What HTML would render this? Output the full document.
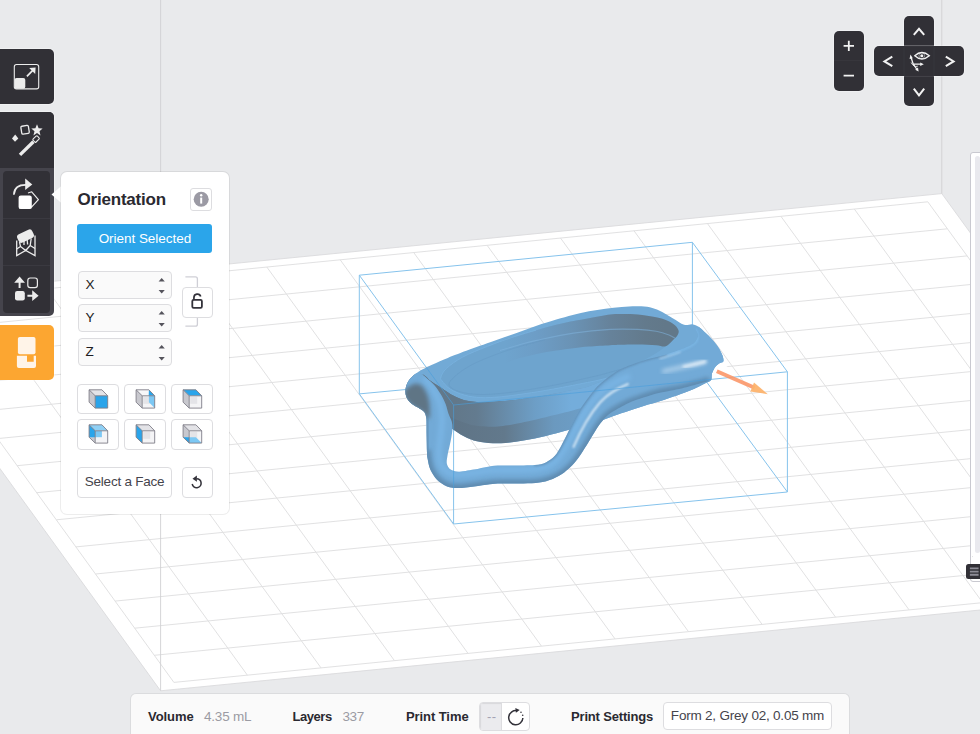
<!DOCTYPE html>
<html lang="en"><head><meta charset="utf-8"><title>PreForm</title>
<style>
html,body{margin:0;padding:0}
body{width:980px;height:734px;overflow:hidden;background:#e9eaec;position:relative;font-family:"Liberation Sans",sans-serif;color:#2a2930}
#scene{position:absolute;left:0;top:0}
.abs{position:absolute}
.dark{background:#313036;box-shadow:0 0 0 1px rgba(255,255,255,.35)}
.tb1{left:-6px;top:49px;width:60px;height:55px;border-radius:5px}
.tb2{left:-6px;top:112px;width:60px;height:204px;border-radius:5px;background:#45444c;box-shadow:0 0 0 1px rgba(255,255,255,.35)}
.tb2a{left:0;top:0;width:60px;height:56px;background:#313036;border-radius:5px 5px 0 0}
.tb2b{left:9px;top:59px;width:47px;height:141.5px;background:#313036;border-radius:4px}
.tb2b i{position:absolute;left:0;width:47px;height:1px;background:#3a3940}
.tb3{left:-6px;top:324.5px;width:60px;height:55px;border-radius:5px;background:#fca631;box-shadow:0 0 0 1px rgba(255,255,255,.35)}
.panel{left:61px;top:172px;width:168px;height:342px;background:#fff;border-radius:6px;box-shadow:0 0 0 1px rgba(0,0,0,.07)}
.ptitle{left:16.5px;top:16.8px;font-weight:bold;font-size:17px;line-height:22px;letter-spacing:-0.2px;color:#2a2930;white-space:nowrap}
.btn{box-sizing:border-box;border:1px solid #dddde0;border-radius:4px;background:#fff}
.info{left:129px;top:16.3px;width:22.4px;height:22.4px;border-radius:3px}
.orient{left:16.4px;top:52.3px;width:135px;height:28.5px;border-radius:3px;background:#2ba5ea;color:#fff;font-size:13.5px;line-height:30.5px;text-align:center;letter-spacing:-0.04px;white-space:nowrap}
.inp{left:16.6px;width:94.4px;height:28.3px;background:#fafafa;font-size:13.5px;line-height:26.3px;color:#1d1d22}
.inp span{position:absolute;left:7px;top:0}
.cube{width:41.5px;height:30.2px}
.bar{left:131px;top:693.5px;width:718px;height:48px;background:#fafafa;border-radius:5px;box-shadow:0 0 0 1px rgba(0,0,0,.06)}
.bar b,.bar span{position:absolute;top:14px;font-size:13.5px;line-height:18px;white-space:nowrap}
.bar b{color:#2a2930;font-size:13px}
.bar span{color:#9b9ba3}
.navd{background:#313036;border-radius:5px;box-shadow:0 0 0 1px rgba(255,255,255,.3)}
</style></head><body>
<svg id="scene" width="980" height="734" viewBox="0 0 980 734">
<polygon points="-122.9,298.7 941.8,193.6 1226.8,585.7 160.6,690.8" fill="#ffffff" stroke="#dadadc" stroke-width="0.9"/>
<path d="M-100.3,303.3 L173.9,682.4 M-100.3,303.3 L927.8,201.8 M-26.9,296 L247.4,675.2 M-80.7,330.3 L947.4,228.8 M46.6,288.8 L321,667.9 M-61.1,357.4 L967.1,255.9 M120,281.5 L394.5,660.7 M-41.6,384.4 L986.8,282.9 M193.4,274.3 L468,653.4 M-22,411.5 L1006.4,310 M266.8,267 L541.5,646.2 M-2.4,438.6 L1026.1,337.1 M340.2,259.8 L615,638.9 M17.2,465.7 L1045.8,364.2 M413.7,252.5 L688.5,631.7 M36.8,492.7 L1065.4,391.2 M487.1,245.3 L762.1,624.4 M56.4,519.8 L1085.1,418.3 M560.5,238 L835.6,617.2 M75.9,546.9 L1104.8,445.4 M634,230.8 L909.1,609.9 M95.5,574 L1124.5,472.5 M707.4,223.5 L982.7,602.7 M115.1,601.1 L1144.2,499.6 M780.9,216.3 L1056.2,595.4 M134.7,628.2 L1163.9,526.7 M854.3,209 L1129.7,588.2 M154.3,655.3 L1183.6,553.8 M927.8,201.8 L1203.3,580.9 M173.9,682.4 L1203.3,580.9" fill="none" stroke="#dfdfe0" stroke-width="0.95"/>
<path d="M160.6,690.8 V0 M941.8,193.6 V0" fill="none" stroke="#d0d0d3" stroke-width="0.9"/>
<circle cx="721" cy="372.5" r="8.6" fill="#ffffff"/>
<path d="M359.3,275.2 L692.4,242.3 M692.4,242.3 L787.4,371.8 M787.4,371.8 L453.6,405 M453.6,405 L359.3,275.2 M359.3,393.9 L692.4,362.6 M692.4,362.6 L787.4,492 M787.4,492 L453.6,524 M453.6,524 L359.3,393.9 M359.3,275.2 L359.3,393.9 M692.4,242.3 L692.4,362.6 M787.4,371.8 L787.4,492 M453.6,405 L453.6,524" fill="none" stroke="#86c3ec" stroke-width="1"/>
<defs>
<clipPath id="modelclip"><path d="M405.6,389C406,386.3 406.8,383.6 408.5,381C410.2,378.4 412.8,375.9 416,373.5C419.2,371.1 423,369.2 427.7,366.8C432.4,364.4 438.6,361.7 444,359.4C449.4,357.1 453.3,355.5 460.4,352.9C467.5,350.2 478.3,346.4 486.5,343.5C494.7,340.6 501.2,338.4 509.4,335.5C517.6,332.6 528.1,328.6 535.9,326C543.7,323.4 550.2,321.4 556.3,319.6C562.4,317.8 567.2,316.4 572.7,315C578.2,313.6 583.5,312.4 589,311.3C594.5,310.2 599.9,309.4 605.4,308.7C610.9,308 616.3,307.3 621.7,306.9C627.1,306.5 633.3,306.2 638,306.3C642.7,306.4 646.2,306.6 649.8,307.3C653.4,308.1 655.8,309 659.6,310.8C663.4,312.6 668.6,315.9 672.7,318.2C676.8,320.5 680.8,323.8 684.1,324.8C687.4,325.8 689.8,323.9 692.3,324.3C694.8,324.7 696.6,325.6 698.8,327C701,328.4 703.2,330.7 705.4,332.7C707.6,334.7 709.7,336.8 711.9,339.2C714.1,341.6 716.6,344.7 718.4,347.4C720.2,350.1 721.7,353.2 722.5,355.6C723.3,358 723.9,360.2 723.3,361.5C722.7,362.8 720.5,362.4 719,363.5C717.5,364.6 715.7,366.3 714.5,368C713.3,369.7 712.5,371.5 711.9,373.5C711.3,375.5 712.2,378.4 711.1,380C710,381.6 708.3,381.8 705.4,383.3C702.5,384.8 698,387.3 693.9,389.1C689.8,390.9 685.7,392.2 680.8,394C675.9,395.8 669.9,397.9 664.5,399.7C659.1,401.5 654,402.8 648.2,404.6C642.4,406.4 635.7,408.6 629.9,410.5C624.1,412.4 618.1,414.4 613.5,416C608.9,417.6 606,418.9 602.1,420.2C598.2,421.5 595.8,422.3 590,424C584.2,425.7 574.6,428.3 567.2,430.3C559.9,432.3 553.2,434.2 545.9,435.9C538.6,437.6 531,439.2 523.5,440.4C516,441.6 508.1,442.9 501,443.2C493.9,443.5 486.4,442.9 480.8,442C475.2,441.1 471.8,440 467.3,438C462.8,436 458.4,433 453.9,430C449.3,427 444.6,423.1 440,420C435.4,416.9 429.4,413.6 426,411.7C422.6,409.8 421.9,409.8 419.5,408.4C417.1,407 413.5,405.4 411.3,403.5C409.1,401.6 407.3,399.4 406.4,397C405.4,394.6 405.2,391.7 405.6,389Z"/><path d="M416,373.5C413.9,374.4 410.1,378.7 408.5,381C406.9,383.3 405.9,386.6 405.6,389C405.3,391.4 405.5,394.8 406.4,397C407.3,399.2 409.3,401.8 411.3,403.5C413.3,405.2 417.5,407 419.5,408.4C421.5,409.8 423.5,410.9 424.5,412.5C425.5,414.1 426,415.8 426.3,419C426.6,422.2 426.4,429.1 426.5,433.7C426.6,438.3 426.8,446.4 426.9,450C427,453.6 427,455.1 427.5,458C428,460.9 428.9,466.3 430.3,469.6C431.7,472.9 434.5,477.2 437,479.7C439.5,482.2 443.9,485.2 447.1,486.4C450.3,487.6 454.3,488 458.4,488C462.4,488 469.4,487 474.1,486.4C478.8,485.8 485.8,484.6 489.8,484.2C493.8,483.8 495.9,483.6 501,483.5C506.1,483.4 517.8,483.6 523.5,483.5C529.2,483.4 534.8,483.3 539.2,482.6C543.6,481.9 549,480.4 552.7,478.9C556.5,477.4 561,474.9 564.2,472.5C567.4,470.1 571.6,466.2 574.3,463.1C577,460 580,455.4 582.5,451.7C585,448 588.3,442.5 590.7,438.6C593.1,434.7 596.6,428.8 598.8,425.6C601,422.4 603.3,419.5 605.4,417.4C607.5,415.3 609.6,413.6 613,411.5C616.4,409.4 623.7,405.3 628.3,403.2C632.9,401.1 639,399.1 643.6,397.6C648.2,396.1 653.2,394.4 658.9,393C664.6,391.6 675.6,389.8 681.8,388.4C688,387 695.9,384.7 700,383.5C704.1,382.3 707.6,382.1 709.4,380.6C711.2,379.1 711.1,375.4 711.9,373.5C712.7,371.6 713.4,369.5 714.5,368C715.6,366.5 717.7,364.5 719,363.5C720.3,362.5 722.8,362.7 723.3,361.5C723.8,360.3 723.2,357.7 722.5,355.6C721.8,353.5 720,349.9 718.4,347.4C716.8,344.9 713.9,341.4 711.9,339.2C709.9,337 707.4,334.5 705.4,332.7C703.4,330.9 700.3,327.6 698.8,327C697.3,326.4 695.7,327.8 695.6,329C695.5,330.2 698.4,333.2 698.2,335.3C698,337.4 696.6,340.9 694.1,343C691.6,345.1 685.9,347.4 681.8,349.1C677.7,350.8 671.1,353 666.5,354.4C661.9,355.8 655.8,357 651.2,358.3C646.6,359.6 640.5,361.3 635.9,362.9C631.3,364.5 624,367.4 620.6,369C617.2,370.6 615.8,371.9 613.5,373.5C611.2,375.1 607.8,377.4 605.4,379.4C603,381.3 599.7,383.9 597.2,386.5C594.7,389.1 591.5,393.5 589,396.8C586.5,400.1 583,404.8 580.8,408.2C578.6,411.6 576.2,416 574.3,419.7C572.3,423.4 569.7,428.8 567.8,432.7C565.9,436.6 563.3,442 561.4,445.5C559.5,449 557.2,453.3 554.9,455.8C552.6,458.3 548.9,461 545.9,462.4C542.9,463.8 539.8,464.6 534.7,465.1C529.6,465.6 518.3,465.5 512.2,465.6C506.1,465.7 500,465.2 494.3,465.8C488.6,466.4 479.5,468.7 474.1,469.6C468.7,470.5 461.9,471.8 458.4,471.8C454.9,471.8 452.2,470.8 450.5,469.6C448.8,468.4 447.2,465.7 446.8,463.5C446.4,461.3 447.2,457.6 447.6,455C448,452.4 449,448.7 449.6,446C450.2,443.3 451,439.6 451.4,437C451.8,434.4 452.4,431.3 452.5,429C452.6,426.7 452.4,424.1 451.8,421.8C451.2,419.5 449.3,416.3 448.4,413.6C447.5,410.9 446.7,406.9 445.6,404C444.5,401.1 442.6,397.4 440.9,394.5C439.2,391.6 436.2,387.4 434.1,385C432,382.6 428.9,380.3 427.2,378.8C425.5,377.3 424.2,375.6 422.5,374.8C420.8,374 418.1,372.6 416,373.5Z"/></clipPath>
<clipPath id="bodyclip"><path d="M405.6,389C406,386.3 406.8,383.6 408.5,381C410.2,378.4 412.8,375.9 416,373.5C419.2,371.1 423,369.2 427.7,366.8C432.4,364.4 438.6,361.7 444,359.4C449.4,357.1 453.3,355.5 460.4,352.9C467.5,350.2 478.3,346.4 486.5,343.5C494.7,340.6 501.2,338.4 509.4,335.5C517.6,332.6 528.1,328.6 535.9,326C543.7,323.4 550.2,321.4 556.3,319.6C562.4,317.8 567.2,316.4 572.7,315C578.2,313.6 583.5,312.4 589,311.3C594.5,310.2 599.9,309.4 605.4,308.7C610.9,308 616.3,307.3 621.7,306.9C627.1,306.5 633.3,306.2 638,306.3C642.7,306.4 646.2,306.6 649.8,307.3C653.4,308.1 655.8,309 659.6,310.8C663.4,312.6 668.6,315.9 672.7,318.2C676.8,320.5 680.8,323.8 684.1,324.8C687.4,325.8 689.8,323.9 692.3,324.3C694.8,324.7 696.6,325.6 698.8,327C701,328.4 703.2,330.7 705.4,332.7C707.6,334.7 709.7,336.8 711.9,339.2C714.1,341.6 716.6,344.7 718.4,347.4C720.2,350.1 721.7,353.2 722.5,355.6C723.3,358 723.9,360.2 723.3,361.5C722.7,362.8 720.5,362.4 719,363.5C717.5,364.6 715.7,366.3 714.5,368C713.3,369.7 712.5,371.5 711.9,373.5C711.3,375.5 712.2,378.4 711.1,380C710,381.6 708.3,381.8 705.4,383.3C702.5,384.8 698,387.3 693.9,389.1C689.8,390.9 685.7,392.2 680.8,394C675.9,395.8 669.9,397.9 664.5,399.7C659.1,401.5 654,402.8 648.2,404.6C642.4,406.4 635.7,408.6 629.9,410.5C624.1,412.4 618.1,414.4 613.5,416C608.9,417.6 606,418.9 602.1,420.2C598.2,421.5 595.8,422.3 590,424C584.2,425.7 574.6,428.3 567.2,430.3C559.9,432.3 553.2,434.2 545.9,435.9C538.6,437.6 531,439.2 523.5,440.4C516,441.6 508.1,442.9 501,443.2C493.9,443.5 486.4,442.9 480.8,442C475.2,441.1 471.8,440 467.3,438C462.8,436 458.4,433 453.9,430C449.3,427 444.6,423.1 440,420C435.4,416.9 429.4,413.6 426,411.7C422.6,409.8 421.9,409.8 419.5,408.4C417.1,407 413.5,405.4 411.3,403.5C409.1,401.6 407.3,399.4 406.4,397C405.4,394.6 405.2,391.7 405.6,389Z"/></clipPath>
<clipPath id="tubeclip"><path d="M416,373.5C413.9,374.4 410.1,378.7 408.5,381C406.9,383.3 405.9,386.6 405.6,389C405.3,391.4 405.5,394.8 406.4,397C407.3,399.2 409.3,401.8 411.3,403.5C413.3,405.2 417.5,407 419.5,408.4C421.5,409.8 423.5,410.9 424.5,412.5C425.5,414.1 426,415.8 426.3,419C426.6,422.2 426.4,429.1 426.5,433.7C426.6,438.3 426.8,446.4 426.9,450C427,453.6 427,455.1 427.5,458C428,460.9 428.9,466.3 430.3,469.6C431.7,472.9 434.5,477.2 437,479.7C439.5,482.2 443.9,485.2 447.1,486.4C450.3,487.6 454.3,488 458.4,488C462.4,488 469.4,487 474.1,486.4C478.8,485.8 485.8,484.6 489.8,484.2C493.8,483.8 495.9,483.6 501,483.5C506.1,483.4 517.8,483.6 523.5,483.5C529.2,483.4 534.8,483.3 539.2,482.6C543.6,481.9 549,480.4 552.7,478.9C556.5,477.4 561,474.9 564.2,472.5C567.4,470.1 571.6,466.2 574.3,463.1C577,460 580,455.4 582.5,451.7C585,448 588.3,442.5 590.7,438.6C593.1,434.7 596.6,428.8 598.8,425.6C601,422.4 603.3,419.5 605.4,417.4C607.5,415.3 609.6,413.6 613,411.5C616.4,409.4 623.7,405.3 628.3,403.2C632.9,401.1 639,399.1 643.6,397.6C648.2,396.1 653.2,394.4 658.9,393C664.6,391.6 675.6,389.8 681.8,388.4C688,387 695.9,384.7 700,383.5C704.1,382.3 707.6,382.1 709.4,380.6C711.2,379.1 711.1,375.4 711.9,373.5C712.7,371.6 713.4,369.5 714.5,368C715.6,366.5 717.7,364.5 719,363.5C720.3,362.5 722.8,362.7 723.3,361.5C723.8,360.3 723.2,357.7 722.5,355.6C721.8,353.5 720,349.9 718.4,347.4C716.8,344.9 713.9,341.4 711.9,339.2C709.9,337 707.4,334.5 705.4,332.7C703.4,330.9 700.3,327.6 698.8,327C697.3,326.4 695.7,327.8 695.6,329C695.5,330.2 698.4,333.2 698.2,335.3C698,337.4 696.6,340.9 694.1,343C691.6,345.1 685.9,347.4 681.8,349.1C677.7,350.8 671.1,353 666.5,354.4C661.9,355.8 655.8,357 651.2,358.3C646.6,359.6 640.5,361.3 635.9,362.9C631.3,364.5 624,367.4 620.6,369C617.2,370.6 615.8,371.9 613.5,373.5C611.2,375.1 607.8,377.4 605.4,379.4C603,381.3 599.7,383.9 597.2,386.5C594.7,389.1 591.5,393.5 589,396.8C586.5,400.1 583,404.8 580.8,408.2C578.6,411.6 576.2,416 574.3,419.7C572.3,423.4 569.7,428.8 567.8,432.7C565.9,436.6 563.3,442 561.4,445.5C559.5,449 557.2,453.3 554.9,455.8C552.6,458.3 548.9,461 545.9,462.4C542.9,463.8 539.8,464.6 534.7,465.1C529.6,465.6 518.3,465.5 512.2,465.6C506.1,465.7 500,465.2 494.3,465.8C488.6,466.4 479.5,468.7 474.1,469.6C468.7,470.5 461.9,471.8 458.4,471.8C454.9,471.8 452.2,470.8 450.5,469.6C448.8,468.4 447.2,465.7 446.8,463.5C446.4,461.3 447.2,457.6 447.6,455C448,452.4 449,448.7 449.6,446C450.2,443.3 451,439.6 451.4,437C451.8,434.4 452.4,431.3 452.5,429C452.6,426.7 452.4,424.1 451.8,421.8C451.2,419.5 449.3,416.3 448.4,413.6C447.5,410.9 446.7,406.9 445.6,404C444.5,401.1 442.6,397.4 440.9,394.5C439.2,391.6 436.2,387.4 434.1,385C432,382.6 428.9,380.3 427.2,378.8C425.5,377.3 424.2,375.6 422.5,374.8C420.8,374 418.1,372.6 416,373.5Z"/></clipPath>
<linearGradient id="gfront" gradientUnits="userSpaceOnUse" x1="455" y1="0" x2="600" y2="0"><stop offset="0" stop-color="#62788a"/><stop offset="0.15" stop-color="#637b8f"/><stop offset="0.55" stop-color="#6d9ec6"/><stop offset="0.8" stop-color="#74addb"/><stop offset="1" stop-color="#74addb"/></linearGradient>
<linearGradient id="glow" gradientUnits="userSpaceOnUse" x1="455" y1="0" x2="620" y2="0"><stop offset="0" stop-color="#5f7486"/><stop offset="0.3" stop-color="#62798c"/><stop offset="0.6" stop-color="#6b99bf"/><stop offset="1" stop-color="#6fa4cf"/></linearGradient>
<linearGradient id="gwall" gradientUnits="userSpaceOnUse" x1="505" y1="0" x2="665" y2="0"><stop offset="0" stop-color="#6ea4ce"/><stop offset="0.2" stop-color="#6d9dc6"/><stop offset="0.43" stop-color="#6a92b4"/><stop offset="0.66" stop-color="#66829a"/><stop offset="0.88" stop-color="#637a8c"/><stop offset="1" stop-color="#627889"/></linearGradient>
<filter id="b1" x="-20%" y="-20%" width="140%" height="140%"><feGaussianBlur stdDeviation="0.8"/></filter>
<filter id="b15" x="-20%" y="-20%" width="140%" height="140%"><feGaussianBlur stdDeviation="1.4"/></filter>
<filter id="b2" x="-20%" y="-20%" width="140%" height="140%"><feGaussianBlur stdDeviation="2"/></filter>
<filter id="b3" x="-30%" y="-30%" width="160%" height="160%"><feGaussianBlur stdDeviation="3"/></filter>
<filter id="b4" x="-30%" y="-30%" width="160%" height="160%"><feGaussianBlur stdDeviation="4.5"/></filter>
</defs>
<path d="M405.6,389C406,386.3 406.8,383.6 408.5,381C410.2,378.4 412.8,375.9 416,373.5C419.2,371.1 423,369.2 427.7,366.8C432.4,364.4 438.6,361.7 444,359.4C449.4,357.1 453.3,355.5 460.4,352.9C467.5,350.2 478.3,346.4 486.5,343.5C494.7,340.6 501.2,338.4 509.4,335.5C517.6,332.6 528.1,328.6 535.9,326C543.7,323.4 550.2,321.4 556.3,319.6C562.4,317.8 567.2,316.4 572.7,315C578.2,313.6 583.5,312.4 589,311.3C594.5,310.2 599.9,309.4 605.4,308.7C610.9,308 616.3,307.3 621.7,306.9C627.1,306.5 633.3,306.2 638,306.3C642.7,306.4 646.2,306.6 649.8,307.3C653.4,308.1 655.8,309 659.6,310.8C663.4,312.6 668.6,315.9 672.7,318.2C676.8,320.5 680.8,323.8 684.1,324.8C687.4,325.8 689.8,323.9 692.3,324.3C694.8,324.7 696.6,325.6 698.8,327C701,328.4 703.2,330.7 705.4,332.7C707.6,334.7 709.7,336.8 711.9,339.2C714.1,341.6 716.6,344.7 718.4,347.4C720.2,350.1 721.7,353.2 722.5,355.6C723.3,358 723.9,360.2 723.3,361.5C722.7,362.8 720.5,362.4 719,363.5C717.5,364.6 715.7,366.3 714.5,368C713.3,369.7 712.5,371.5 711.9,373.5C711.3,375.5 712.2,378.4 711.1,380C710,381.6 708.3,381.8 705.4,383.3C702.5,384.8 698,387.3 693.9,389.1C689.8,390.9 685.7,392.2 680.8,394C675.9,395.8 669.9,397.9 664.5,399.7C659.1,401.5 654,402.8 648.2,404.6C642.4,406.4 635.7,408.6 629.9,410.5C624.1,412.4 618.1,414.4 613.5,416C608.9,417.6 606,418.9 602.1,420.2C598.2,421.5 595.8,422.3 590,424C584.2,425.7 574.6,428.3 567.2,430.3C559.9,432.3 553.2,434.2 545.9,435.9C538.6,437.6 531,439.2 523.5,440.4C516,441.6 508.1,442.9 501,443.2C493.9,443.5 486.4,442.9 480.8,442C475.2,441.1 471.8,440 467.3,438C462.8,436 458.4,433 453.9,430C449.3,427 444.6,423.1 440,420C435.4,416.9 429.4,413.6 426,411.7C422.6,409.8 421.9,409.8 419.5,408.4C417.1,407 413.5,405.4 411.3,403.5C409.1,401.6 407.3,399.4 406.4,397C405.4,394.6 405.2,391.7 405.6,389Z" fill="#72aad6"/>
<g clip-path="url(#bodyclip)">
<path d="M536.7,330.2C542.7,328.5 551.4,326 556.3,324.8C561.2,323.6 569.1,321.9 573.5,321C577.9,320.1 584.1,319.1 589,318.2C593.9,317.3 605.5,315.1 610.2,314.5C614.9,313.9 620.3,314 624,314C627.7,314 633.5,314.2 637.8,314.6C642.1,315 652.1,316.5 656.1,317.3C660.1,318.1 665,319.7 667.5,320.8C670,321.9 673.7,324.2 675.2,325.5C676.7,326.8 678.3,329.5 678.6,330.8C678.9,332.1 677.9,334.4 677.3,335.5C676.7,336.6 675.3,337.9 673.8,339.3C672.3,340.7 667.9,344.5 665.8,346.2C663.7,347.9 660.8,350.2 658,352C655.2,353.8 648.5,357.5 645,359.5C641.5,361.5 635.6,364.9 632,367C628.4,369.1 622.3,373.3 618,375C613.7,376.7 604.7,378.7 600,379.8C595.3,380.9 587.9,382.3 582.9,383.3C577.9,384.3 567.9,386.3 562.4,387.3C556.9,388.3 547.4,390.1 542,391C536.6,391.9 527,393.3 521.6,394.1C516.2,394.9 506.6,396.2 501.2,396.7C495.8,397.2 485.7,397.8 480.8,397.6C475.9,397.4 468.6,396.2 464.5,395.1C460.4,394 453.2,390.9 450.2,389C447.2,387.1 443.2,382.4 442,380.8C440.8,379.2 440.4,378.6 441,377C441.6,375.4 443.4,371.3 446.3,368.6C449.2,365.9 457.3,360 462.7,357.1C468.1,354.2 480.6,349.1 487.1,346.5C493.6,343.9 505,339.8 511.6,337.6C518.2,335.4 530.7,331.9 536.7,330.2Z" fill="#6ea4ce"/>
<path d="M422.8,375C425.8,375.1 428.3,379.3 430,380.5C431.7,381.7 437.8,385.5 440,387C442.2,388.5 449.8,393.8 452.2,395.1C454.6,396.4 461.6,399.5 464.5,400.2C467.4,400.9 477.1,402.1 480.8,402.2C484.5,402.3 497.1,401.5 501.2,401.2C505.3,400.9 517.5,399.7 521.6,399.2C525.7,398.7 537.9,396.8 542,396.1C546.1,395.4 558.3,392.8 562.4,392C566.5,391.2 579.6,388.8 582.9,388C586.2,387.2 592.4,384.9 595.1,383.9C597.8,382.9 607,379.2 610,378C613,376.8 613,372.6 625,372C637,371.4 719.5,363.2 730,372C740.5,380.8 763,451.2 730,460C697,468.8 433,468 400,460C367,452 397.7,388.5 400,380C402.3,371.5 419.8,374.9 422.8,375Z" fill="url(#glow)"/>
<path d="M422.8,375C421.5,371.7 427.7,378.9 430,380.5C432.3,382.1 437,385.1 440,387C443,388.9 448.9,393.3 452.2,395.1C455.5,396.9 460.7,399.3 464.5,400.2C468.3,401.1 475.9,402.1 480.8,402.2C485.7,402.3 495.8,401.6 501.2,401.2C506.6,400.8 516.2,399.9 521.6,399.2C527,398.5 536.6,397.1 542,396.1C547.4,395.1 556.9,393.1 562.4,392C567.9,390.9 578.5,389.1 582.9,388C587.3,386.9 591.5,385.2 595.1,383.9C598.7,382.6 606,379.6 610,378C614,376.4 611.4,372.8 625,372C638.6,371.2 700.9,372.5 712,372C723.1,371.5 712.3,367.3 708,368C703.7,368.7 689.1,374.1 680,377C670.9,379.9 649.3,387.1 640,390C630.7,392.9 616.7,396.9 610,399C603.3,401.1 595,404 590,405.5C585,407 577.7,409.1 572.7,410.4C567.7,411.7 557.7,414.1 552.2,415.5C546.7,416.9 537.2,419.4 531.8,420.6C526.4,421.8 516.8,423.9 511.4,424.7C506,425.5 496.4,426.7 491,426.7C485.6,426.7 475.8,425.9 470.6,424.7C465.4,423.5 456.3,420.2 452.2,417.6C448.1,415 443.9,410.7 440,405C436.1,399.3 424.1,378.3 422.8,375Z" fill="url(#gfront)"/>
<path d="M500,342C503,337.5 511.9,338 518,336C524.1,334 530.3,332.1 536.7,330.2C543.1,328.3 550.2,326.3 556.3,324.8C562.4,323.3 568,322.1 573.5,321C579,319.9 582.9,319.3 589,318.2C595.1,317.1 604.4,315.2 610.2,314.5C616,313.8 619.4,314 624,314C628.6,314 632.4,314.1 637.8,314.6C643.1,315.2 651.1,316.3 656.1,317.3C661.1,318.3 664.3,319.4 667.5,320.8C670.7,322.2 673.4,323.8 675.2,325.5C677.1,327.2 678.2,329.1 678.6,330.8C679,332.5 678.1,334.1 677.3,335.5C676.5,336.9 675.7,337.5 673.8,339.3C671.9,341.1 668.8,345.2 665.8,346.2C662.8,347.2 660.8,345.5 656.1,345.2C651.4,344.9 643.5,344.7 637.8,344.6C632.1,344.5 626.3,344.7 621.7,344.8C617.1,344.9 615.7,344.9 610.2,345.2C604.8,345.5 595.1,346.1 589,346.6C582.9,347.1 579,347.5 573.5,348.2C568,348.9 562.4,349.6 556.3,350.6C550.2,351.6 543.1,352.7 536.7,354C530.3,355.3 524.1,357 518,358.5C511.9,360 503,365.8 500,363C497,360.2 497,346.5 500,342Z" fill="url(#gwall)"/>
<path d="M500,350.5C503,349.6 511.9,346.9 518,345.2C524.1,343.5 527.5,342.4 536.7,340.4C546,338.4 561.2,334.9 573.5,333.1C585.8,331.3 599.5,330 610.2,329.4C620.9,328.8 630.1,329.1 637.8,329.4C645.4,329.7 650.9,330.3 656.1,331.2C661.3,332.1 665.9,333.7 669,334.9C672.1,336.1 674,337.6 675,338.2" fill="none" stroke="#7fb2dc" stroke-width="1.1" opacity="0.55"/>
<path d="M536.1,330.2C532,331.4 519.8,334.9 511.6,337.6C503.4,340.3 495.2,343.2 487.1,346.5C479,349.8 469.5,353.4 462.7,357.1C455.9,360.8 449.9,365.3 446.3,368.6C442.7,371.9 441.7,375 441,377C440.3,379 440.5,378.8 442,380.8C443.5,382.8 446.4,386.6 450.2,389C453.9,391.4 459.4,393.7 464.5,395.1C469.6,396.5 474.7,397.3 480.8,397.6C486.9,397.9 494.4,397.3 501.2,396.7C508,396.1 514.8,395.1 521.6,394.1C528.4,393.2 535.2,392.1 542,391C548.8,389.9 555.6,388.6 562.4,387.3C569.2,386 576.6,384.6 582.9,383.3C589.2,382.1 594.1,381.2 600,379.8C605.9,378.4 615,375.8 618,375" fill="none" stroke="#80bbe8" stroke-width="1" opacity="0.45"/>
<path d="M544.3,340C540.2,341.1 528,344.1 519.8,346.5C511.6,348.9 503.5,351.6 495.3,354.7C487.1,357.8 477.6,361.6 470.8,365.3C464,369 458.1,373.5 454.5,376.7C450.9,379.9 448.9,382.3 449,384.5C449.1,386.7 451.8,388.5 455,390C458.2,391.5 463,392.8 468,393.5C473,394.2 478.8,394.6 485,394.5C491.2,394.4 497.5,393.8 505,393C512.5,392.2 520.8,391 530,389.5C539.2,388 550.8,385.8 560,384C569.2,382.2 578,380.1 585,378.5C592,376.9 596.2,376 602,374.5C607.8,373 617,370.3 620,369.5" fill="none" stroke="#5f93bd" stroke-width="1" opacity="0.3"/>
</g>
<path d="M416,373.5C413.9,374.4 410.1,378.7 408.5,381C406.9,383.3 405.9,386.6 405.6,389C405.3,391.4 405.5,394.8 406.4,397C407.3,399.2 409.3,401.8 411.3,403.5C413.3,405.2 417.5,407 419.5,408.4C421.5,409.8 423.5,410.9 424.5,412.5C425.5,414.1 426,415.8 426.3,419C426.6,422.2 426.4,429.1 426.5,433.7C426.6,438.3 426.8,446.4 426.9,450C427,453.6 427,455.1 427.5,458C428,460.9 428.9,466.3 430.3,469.6C431.7,472.9 434.5,477.2 437,479.7C439.5,482.2 443.9,485.2 447.1,486.4C450.3,487.6 454.3,488 458.4,488C462.4,488 469.4,487 474.1,486.4C478.8,485.8 485.8,484.6 489.8,484.2C493.8,483.8 495.9,483.6 501,483.5C506.1,483.4 517.8,483.6 523.5,483.5C529.2,483.4 534.8,483.3 539.2,482.6C543.6,481.9 549,480.4 552.7,478.9C556.5,477.4 561,474.9 564.2,472.5C567.4,470.1 571.6,466.2 574.3,463.1C577,460 580,455.4 582.5,451.7C585,448 588.3,442.5 590.7,438.6C593.1,434.7 596.6,428.8 598.8,425.6C601,422.4 603.3,419.5 605.4,417.4C607.5,415.3 609.6,413.6 613,411.5C616.4,409.4 623.7,405.3 628.3,403.2C632.9,401.1 639,399.1 643.6,397.6C648.2,396.1 653.2,394.4 658.9,393C664.6,391.6 675.6,389.8 681.8,388.4C688,387 695.9,384.7 700,383.5C704.1,382.3 707.6,382.1 709.4,380.6C711.2,379.1 711.1,375.4 711.9,373.5C712.7,371.6 713.4,369.5 714.5,368C715.6,366.5 717.7,364.5 719,363.5C720.3,362.5 722.8,362.7 723.3,361.5C723.8,360.3 723.2,357.7 722.5,355.6C721.8,353.5 720,349.9 718.4,347.4C716.8,344.9 713.9,341.4 711.9,339.2C709.9,337 707.4,334.5 705.4,332.7C703.4,330.9 700.3,327.6 698.8,327C697.3,326.4 695.7,327.8 695.6,329C695.5,330.2 698.4,333.2 698.2,335.3C698,337.4 696.6,340.9 694.1,343C691.6,345.1 685.9,347.4 681.8,349.1C677.7,350.8 671.1,353 666.5,354.4C661.9,355.8 655.8,357 651.2,358.3C646.6,359.6 640.5,361.3 635.9,362.9C631.3,364.5 624,367.4 620.6,369C617.2,370.6 615.8,371.9 613.5,373.5C611.2,375.1 607.8,377.4 605.4,379.4C603,381.3 599.7,383.9 597.2,386.5C594.7,389.1 591.5,393.5 589,396.8C586.5,400.1 583,404.8 580.8,408.2C578.6,411.6 576.2,416 574.3,419.7C572.3,423.4 569.7,428.8 567.8,432.7C565.9,436.6 563.3,442 561.4,445.5C559.5,449 557.2,453.3 554.9,455.8C552.6,458.3 548.9,461 545.9,462.4C542.9,463.8 539.8,464.6 534.7,465.1C529.6,465.6 518.3,465.5 512.2,465.6C506.1,465.7 500,465.2 494.3,465.8C488.6,466.4 479.5,468.7 474.1,469.6C468.7,470.5 461.9,471.8 458.4,471.8C454.9,471.8 452.2,470.8 450.5,469.6C448.8,468.4 447.2,465.7 446.8,463.5C446.4,461.3 447.2,457.6 447.6,455C448,452.4 449,448.7 449.6,446C450.2,443.3 451,439.6 451.4,437C451.8,434.4 452.4,431.3 452.5,429C452.6,426.7 452.4,424.1 451.8,421.8C451.2,419.5 449.3,416.3 448.4,413.6C447.5,410.9 446.7,406.9 445.6,404C444.5,401.1 442.6,397.4 440.9,394.5C439.2,391.6 436.2,387.4 434.1,385C432,382.6 428.9,380.3 427.2,378.8C425.5,377.3 424.2,375.6 422.5,374.8C420.8,374 418.1,372.6 416,373.5Z" fill="#72aad7"/>
<g clip-path="url(#tubeclip)">
<path d="M426.9,450C427,451.3 426.9,454.7 427.5,458C428.1,461.3 428.7,466 430.3,469.6C431.9,473.2 434.2,476.9 437,479.7C439.8,482.5 443.5,485 447.1,486.4C450.7,487.8 453.9,488 458.4,488C462.9,488 468.9,487 474.1,486.4C479.3,485.8 485.3,484.7 489.8,484.2C494.3,483.7 495.4,483.6 501,483.5C506.6,483.4 517.1,483.6 523.5,483.5C529.9,483.4 534.3,483.4 539.2,482.6C544.1,481.8 548.5,480.6 552.7,478.9C556.9,477.2 560.6,475.1 564.2,472.5C567.8,469.9 571.2,466.6 574.3,463.1C577.3,459.6 579.8,455.8 582.5,451.7C585.2,447.6 588,443 590.7,438.6C593.4,434.2 596.3,429.1 598.8,425.6C601.2,422.1 603,419.8 605.4,417.4C607.8,415 609.2,413.9 613,411.5C616.8,409.1 623.2,405.5 628.3,403.2C633.4,400.9 638.5,399.3 643.6,397.6C648.7,395.9 652.5,394.5 658.9,393C665.3,391.5 674.9,390 681.8,388.4C688.6,386.8 695.4,384.8 700,383.5C704.6,382.2 707.8,381.1 709.4,380.6" fill="none" stroke="#5f8bb0" stroke-width="8" filter="url(#b2)"/>
<path d="M424.5,412.5C424.8,413.6 426,415.5 426.3,419C426.6,422.5 426.4,428.5 426.5,433.7C426.6,438.9 426.7,445.9 426.9,450C427.1,454.1 427.4,456.7 427.5,458" fill="none" stroke="#6492b8" stroke-width="4" filter="url(#b15)"/>
<path d="M424,378C425.5,379.8 430.4,385 433,389C435.6,393 438,397.2 439.5,402C441,406.8 441.8,412.3 442,418C442.2,423.7 441,430.3 440.5,436C440,441.7 439.1,447.7 439,452C438.9,456.3 439,459 440,462C441,465 442.5,467.9 445,470C447.5,472.1 450.8,473.9 455,474.5C459.2,475.1 464.2,474.2 470,473.5C475.8,472.8 483.3,471.1 490,470.5C496.7,469.9 503,470.2 510,470C517,469.8 526,470 532,469.5C538,469 542,468.5 546,467C550,465.5 553,463.3 556,460.5C559,457.7 561.5,453.9 564,450C566.5,446.1 568.7,441.3 571,437C573.3,432.7 575.5,428.5 578,424C580.5,419.5 583.2,414.3 586,410C588.8,405.7 591.8,401.5 595,398C598.2,394.5 601.5,391.7 605,389C608.5,386.3 611.8,384.2 616,382C620.2,379.8 627.7,377 630,376" fill="none" stroke="#79b4e3" stroke-width="6" filter="url(#b2)"/>
<path d="M408.5,387C410.3,385.8 412.8,384.1 415,383.8C417.2,383.6 419.7,384.1 421.5,385.5C423.3,386.9 424.8,389.6 426,392C427.2,394.4 428.2,397.2 428.8,400C429.4,402.8 429.7,405.8 429.8,409C429.9,412.2 430.1,418.2 429.3,419C428.5,419.8 426.6,415.5 425,414C423.4,412.5 421.8,411.3 419.5,409.8C417.2,408.3 413.7,407.1 411.3,405C408.9,402.9 406.1,399.8 405,397.5C403.9,395.2 403.8,392.8 404.4,391C405,389.2 406.7,388.2 408.5,387Z" fill="#5f7485" filter="url(#b2)"/>
<path d="M666.5,354.4C664,355 656.3,356.9 651.2,358.3C646.1,359.7 641,361.1 635.9,362.9C630.8,364.7 624.3,367.2 620.6,369C616.9,370.8 616,371.8 613.5,373.5C611,375.2 608.1,377.2 605.4,379.4C602.7,381.6 599.9,383.6 597.2,386.5C594.5,389.4 591.7,393.2 589,396.8C586.3,400.4 583.2,404.4 580.8,408.2C578.3,412 576.5,415.6 574.3,419.7C572.1,423.8 569.9,428.4 567.8,432.7C565.6,437 563.5,441.6 561.4,445.5C559.2,449.4 557.5,453 554.9,455.8C552.3,458.6 549.3,460.8 545.9,462.4C542.5,463.9 536.6,464.7 534.7,465.1" fill="none" stroke="#5a82a6" stroke-width="2.2" filter="url(#b1)" opacity="0.75"/>
<path d="M573.5,447 C580,432 590,414 600,402.5 C607,394.5 616,389 628,384" fill="none" stroke="#e6f2fb" stroke-width="2" stroke-linecap="round" filter="url(#b1)" opacity="0.85"/>
<path d="M664,371.2 C678,368 692,365 705,361.8" fill="none" stroke="#dcecf9" stroke-width="4.5" stroke-linecap="round" filter="url(#b2)" opacity="0.55"/>
<path d="M684,366.6 C692,364.8 699,363.2 705,361.6" fill="none" stroke="#f4f9fd" stroke-width="3" stroke-linecap="round" filter="url(#b15)" opacity="0.8"/>
<path d="M660,358.6 C667,356.6 673,354.6 680,351.8" fill="none" stroke="#cfe6f8" stroke-width="2" stroke-linecap="round" filter="url(#b1)" opacity="0.55"/>
<path d="M690.5,325 C696,329 699,335 696.5,341 C693,346.5 682,350.5 668,354.5" fill="none" stroke="#7ebae8" stroke-width="2.2" filter="url(#b1)" opacity="0.9"/>
</g>
<defs><linearGradient id="garrow" gradientUnits="userSpaceOnUse" x1="717" y1="371" x2="768" y2="394"><stop offset="0" stop-color="#fb9163"/><stop offset="0.6" stop-color="#fc9c62"/><stop offset="0.75" stop-color="#fdb068"/><stop offset="1" stop-color="#fdb76a"/></linearGradient></defs>
<path d="M717.6,369.4 L755.4,385.9 L753.8,389.6 L716,373.1 Z" fill="#fb9465" opacity="0.88"/>
<path d="M754,382.4 L767.8,394.2 L750.4,391.4 Z" fill="#fdb168" opacity="0.92"/>
<path d="M359.3,275.2 L453.6,405 M453.6,405 L787.4,371.8 M453.6,405 L453.6,524" fill="none" stroke="#4a9fdc" stroke-width="1" opacity="0.6" clip-path="url(#modelclip)"/>
</svg>

<!-- left toolbar -->
<div class="abs dark tb1">
<svg class="abs" style="left:6px;top:0" width="54" height="55" viewBox="0 49 54 55"><rect x="14.3" y="64.5" width="24.4" height="24.4" rx="2.2" fill="none" stroke="#ececec" stroke-width="1.1"/><rect x="14.5" y="78" width="10.8" height="10.7" rx="2" fill="#ececec"/><path d="M26.9 76.3 L33.5 69.7" stroke="#ececec" stroke-width="1.7" fill="none"/><path d="M29.2 68 L35.6 67.6 L35.2 74 Z" fill="#ececec"/></svg>
</div>
<div class="abs tb2">
 <div class="abs tb2a"></div>
 <div class="abs tb2b"><i style="top:47px"></i><i style="top:94px"></i></div>
 <svg class="abs" style="left:6px;top:0" width="54" height="204" viewBox="0 112 54 204">
  <!-- magic wand -->
  <g fill="#ececec"><path d="M20 154.9 L33.4 141.7" stroke="#ececec" stroke-width="3.4" fill="none"/><rect x="-3" y="-2.1" width="6" height="4.2" rx="1" transform="translate(36.1,139.1) rotate(-44)" fill="#313036" stroke="#ececec" stroke-width="1.1"/><path d="M15.2 134.5 L18.3 138.4 L15 141.7 L12 138.4 Z"/><path d="M37 124.2 L38.6 128.3 L42.6 128.6 L39.5 131.3 L40.5 135.4 L37 133.1 L33.4 135.4 L34.5 131.3 L31.3 128.6 L35.4 128.3 Z"/><rect x="21.3" y="125.8" width="7.6" height="8" rx="1.2" fill="none" stroke="#ececec" stroke-width="1.3" transform="rotate(-9 25 130)"/></g>
  <!-- orient -->
  <g><path d="M14 194 C14.5 187.5 19.5 184.8 26 184.9" fill="none" stroke="#ececec" stroke-width="1.8" stroke-linecap="round"/><path d="M25.2 178.6 L32.3 184.4 L25.2 190 Z" fill="#ececec"/><path d="M28 193 L31.7 191.8 L38.4 199.6 L31.5 207.2 L28 206" fill="none" stroke="#ececec" stroke-width="1.2" stroke-linejoin="round"/><rect x="18.6" y="195.5" width="13.2" height="13.6" rx="2.2" fill="#fff"/></g>
  <!-- supports -->
  <g fill="none" stroke="#ececec" stroke-width="1.3"><path d="M16.7 240.5 L16.7 255.6 L25.7 250.5 L35 255.6 L35 235.5"/><path d="M19.5 242 L20.5 246.5 L25.7 250.5 L30.2 245.5 L31.2 238.5 M24 241 L24 245 M27.2 240 L27.6 244.5 M20.5 246.5 L16.7 249 M30.2 245.5 L35 248.5"/><rect x="17.2" y="231.5" width="16.5" height="9.2" rx="3" fill="#ececec" stroke="none" transform="rotate(-25 25.5 236)"/></g>
  <!-- layout -->
  <g fill="#ececec"><path d="M19.6 276.6 L25 282.8 L20.6 282.8 L20.6 288 L18.6 288 L18.6 282.8 L14.2 282.8 Z"/><rect x="27.8" y="278" width="9.6" height="9.6" rx="2.4" fill="none" stroke="#ececec" stroke-width="1.2"/><rect x="15" y="291" width="9.8" height="9.4" rx="2.2"/><path d="M38.6 295.7 L32.2 301 L32.2 296.7 L27.4 296.7 L27.4 294.7 L32.2 294.7 L32.2 290.3 Z"/></g>
 </svg>
</div>
<div class="abs tb3">
<svg class="abs" style="left:6px;top:0" width="54" height="55" viewBox="0 324.5 54 55"><rect x="17.9" y="336.4" width="17.6" height="17.3" rx="1.9" fill="#fff4e8"/><path d="M16.9 355.2 H27 V361.2 H33.7 V355.2 H36 V365.5 Q36 367.5 34 367.5 H18.9 Q16.9 367.5 16.9 365.5 Z" fill="#fff4e8"/></svg>
</div>

<!-- orientation panel -->
<svg class="abs" style="left:50px;top:184px" width="14" height="22"><path d="M12 1.5 L1.5 10.5 L12 19.5 Z" fill="#fff"/></svg>
<div class="abs panel">
 <div class="abs ptitle">Orientation</div>
 <div class="abs btn info"><svg class="abs" style="left:0;top:0" width="20.4" height="20.4" viewBox="0 0 20.4 20.4"><circle cx="10.2" cy="10.2" r="7.5" fill="#9b9aa4"/><rect x="9.2" y="8.6" width="2" height="6" fill="#fff"/><circle cx="10.2" cy="6.2" r="1.2" fill="#fff"/></svg></div>
 <div class="abs orient">Orient Selected</div>
 <div class="abs btn inp" style="top:98.6px"><span>X</span><svg class="abs" style="left:78px;top:4px" width="10" height="20"><path d="M1.6 5.5 L4.7 2 L7.8 5.5 Z M1.6 14 L4.7 17.5 L7.8 14 Z" fill="#55545c"/></svg></div>
 <div class="abs btn inp" style="top:132.2px"><span>Y</span><svg class="abs" style="left:78px;top:4px" width="10" height="20"><path d="M1.6 5.5 L4.7 2 L7.8 5.5 Z M1.6 14 L4.7 17.5 L7.8 14 Z" fill="#55545c"/></svg></div>
 <div class="abs btn inp" style="top:166px"><span>Z</span><svg class="abs" style="left:78px;top:4px" width="10" height="20"><path d="M1.6 5.5 L4.7 2 L7.8 5.5 Z M1.6 14 L4.7 17.5 L7.8 14 Z" fill="#55545c"/></svg></div>
 <svg class="abs" style="left:120px;top:100px" width="36" height="60" viewBox="181 272 36 60"><path d="M185.4 276.9 H195.4 Q197.4 276.9 197.4 278.9 V288 M185.4 326.2 H195.4 Q197.4 326.2 197.4 324.2 V317" fill="none" stroke="#cfcfd6" stroke-width="1.3"/></svg>
 <div class="abs btn" style="left:121.2px;top:115.3px;width:30.8px;height:30.8px"><svg class="abs" style="left:0;top:0" width="28" height="28" viewBox="183.2 287.7 28 28"><rect x="192.5" y="299.6" width="9.6" height="8" rx="1.3" fill="none" stroke="#33323a" stroke-width="1.8"/><path d="M194.1 299.4 V297.4 C194.1 293.2 199.8 292.6 200.9 296.3" fill="none" stroke="#33323a" stroke-width="1.7"/></svg></div>
 <div class="abs btn cube" style="left:16.2px;top:211.9px"><svg class="abs" style="left:0;top:0" width="39.5" height="28.2"><polygon points="11.1,4.8 23.9,4.8 29.7,10.8 17.2,10.8" fill="#e3e3e7"/><polygon points="11.1,4.8 17.2,10.8 17.2,23.1 11.1,17.2" fill="#c8c8ce"/><polygon points="17.2,10.8 29.7,10.8 29.7,23.1 17.2,23.1" fill="#2aa4ea"/><path d="M11.1,4.8 L23.9,4.8 L29.7,10.8 L29.7,23.1 L17.2,23.1 L11.1,17.2 Z M11.1,4.8 L17.2,10.8 M17.2,10.8 L29.7,10.8 M17.2,10.8 L17.2,23.1" fill="none" stroke="#7f7e88" stroke-width="0.9" stroke-linejoin="round"/></svg></div>
<div class="abs btn cube" style="left:63.3px;top:211.9px"><svg class="abs" style="left:0;top:0" width="39.5" height="28.2"><polygon points="11.1,4.8 23.9,4.8 29.7,10.8 17.2,10.8" fill="#f7f7f9"/><polygon points="11.1,4.8 17.2,10.8 17.2,23.1 11.1,17.2" fill="#c8c8ce"/><polygon points="17.2,10.8 29.7,10.8 29.7,23.1 17.2,23.1" fill="#f4f4f6"/><polygon points="18.2,11.8 25.2,11.8 25.2,18.8 18.2,18.8" fill="#e4e4e8"/><polygon points="23.9,4.8 29.7,10.8 23.7,10.8" fill="#2aa4ea"/><polygon points="23.9,10.8 29.7,10.8 29.7,23.1 23.9,17.3" fill="#7cc8f4"/><path d="M11.1,4.8 L23.9,4.8 L29.7,10.8 L29.7,23.1 L17.2,23.1 L11.1,17.2 Z M11.1,4.8 L17.2,10.8 M17.2,10.8 L29.7,10.8 M17.2,10.8 L17.2,23.1" fill="none" stroke="#7f7e88" stroke-width="0.9" stroke-linejoin="round"/></svg></div>
<div class="abs btn cube" style="left:110.3px;top:211.9px"><svg class="abs" style="left:0;top:0" width="39.5" height="28.2"><polygon points="11.1,4.8 23.9,4.8 29.7,10.8 17.2,10.8" fill="#2aa4ea"/><polygon points="11.1,4.8 17.2,10.8 17.2,23.1 11.1,17.2" fill="#c8c8ce"/><polygon points="17.2,10.8 29.7,10.8 29.7,23.1 17.2,23.1" fill="#f4f4f6"/><polygon points="18.2,11.8 25.2,11.8 25.2,18.8 18.2,18.8" fill="#e4e4e8"/><path d="M11.1,4.8 L23.9,4.8 L29.7,10.8 L29.7,23.1 L17.2,23.1 L11.1,17.2 Z M11.1,4.8 L17.2,10.8 M17.2,10.8 L29.7,10.8 M17.2,10.8 L17.2,23.1" fill="none" stroke="#7f7e88" stroke-width="0.9" stroke-linejoin="round"/></svg></div>
<div class="abs btn cube" style="left:16.2px;top:247.4px"><svg class="abs" style="left:0;top:0" width="39.5" height="28.2"><polygon points="11.1,4.8 23.9,4.8 29.7,10.8 17.2,10.8" fill="#8fd0f5"/><polygon points="11.1,4.8 17.2,10.8 17.2,23.1 11.1,17.2" fill="#c8c8ce"/><polygon points="17.2,10.8 29.7,10.8 29.7,23.1 17.2,23.1" fill="#f4f4f6"/><polygon points="11.1,4.8 17.2,10.8 17.2,17.2 11.1,17.2" fill="#2aa4ea"/><polygon points="17.2,10.8 23.9,10.8 23.9,17.2 17.2,17.2" fill="#7cc8f4"/><path d="M11.1,4.8 L23.9,4.8 L29.7,10.8 L29.7,23.1 L17.2,23.1 L11.1,17.2 Z M11.1,4.8 L17.2,10.8 M17.2,10.8 L29.7,10.8 M17.2,10.8 L17.2,23.1" fill="none" stroke="#7f7e88" stroke-width="0.9" stroke-linejoin="round"/></svg></div>
<div class="abs btn cube" style="left:63.3px;top:247.4px"><svg class="abs" style="left:0;top:0" width="39.5" height="28.2"><polygon points="11.1,4.8 23.9,4.8 29.7,10.8 17.2,10.8" fill="#e3e3e7"/><polygon points="11.1,4.8 17.2,10.8 17.2,23.1 11.1,17.2" fill="#2aa4ea"/><polygon points="17.2,10.8 29.7,10.8 29.7,23.1 17.2,23.1" fill="#f4f4f6"/><polygon points="18.2,11.8 25.2,11.8 25.2,18.8 18.2,18.8" fill="#e4e4e8"/><path d="M11.1,4.8 L23.9,4.8 L29.7,10.8 L29.7,23.1 L17.2,23.1 L11.1,17.2 Z M11.1,4.8 L17.2,10.8 M17.2,10.8 L29.7,10.8 M17.2,10.8 L17.2,23.1" fill="none" stroke="#7f7e88" stroke-width="0.9" stroke-linejoin="round"/></svg></div>
<div class="abs btn cube" style="left:110.3px;top:247.4px"><svg class="abs" style="left:0;top:0" width="39.5" height="28.2"><polygon points="11.1,4.8 23.9,4.8 29.7,10.8 17.2,10.8" fill="#e3e3e7"/><polygon points="11.1,4.8 17.2,10.8 17.2,23.1 11.1,17.2" fill="#c8c8ce"/><polygon points="17.2,10.8 29.7,10.8 29.7,23.1 17.2,23.1" fill="#f4f4f6"/><polygon points="18.2,11.8 25.2,11.8 25.2,18.8 18.2,18.8" fill="#e4e4e8"/><polygon points="11.1,17.2 17.2,23.1 17.2,17.2" fill="#2aa4ea"/><polygon points="17.2,17.2 23.9,17.2 29.7,23.1 17.2,23.1" fill="#7cc8f4"/><path d="M11.1,4.8 L23.9,4.8 L29.7,10.8 L29.7,23.1 L17.2,23.1 L11.1,17.2 Z M11.1,4.8 L17.2,10.8 M17.2,10.8 L29.7,10.8 M17.2,10.8 L17.2,23.1" fill="none" stroke="#7f7e88" stroke-width="0.9" stroke-linejoin="round"/></svg></div>
 <div class="abs btn" style="left:16.2px;top:295.4px;width:94.8px;height:30.2px;font-size:13.5px;line-height:28.2px;color:#45444c;text-align:center;letter-spacing:-0.23px;white-space:nowrap">Select a Face</div>
 <div class="abs btn" style="left:121.1px;top:295.4px;width:30.6px;height:30.2px"><svg class="abs" style="left:0;top:0" width="28.6" height="28.2" viewBox="183.1 468.4 28.6 28.2"><path d="M196.75 479.1 A4.5 4.5 0 1 1 192.3 484.4" fill="none" stroke="#33323a" stroke-width="1.55"/><path d="M192.6 479.1 L197 476 L197 482.2 Z" fill="#33323a"/></svg></div>
</div>

<!-- nav controls -->
<div class="abs navd" style="left:833.5px;top:30.6px;width:30.7px;height:60.3px"></div>
<div class="abs navd" style="left:903.8px;top:16.2px;width:30.3px;height:89.9px"></div>
<div class="abs navd" style="left:873.9px;top:46.1px;width:90px;height:30.4px"></div>
<div class="abs" style="left:903.8px;top:46.1px;width:30.3px;height:30.4px;background:#313036"></div>
<svg class="abs" style="left:820px;top:10px" width="160" height="100" viewBox="820 10 160 100">
 <path d="M834 60.5 H863.7 M904.3 46.3 H933.6 M904.3 76.3 H933.6 M904 46.6 V76 M934 46.6 V76" stroke="#37363c" stroke-width="1" fill="none"/>
 <g fill="none" stroke="#f2f2f2" stroke-width="1.8">
 <path d="M843.6 45.9 H854 M848.8 40.7 V51.1 M843.6 75.6 H854"/>
 <path d="M913.8 34.9 L919 28.9 L924.2 34.9 M913.8 88.6 L919 95.4 L924.2 88.6 M892.3 56.6 L884.4 61.4 L892.3 66.2 M945.8 56.6 L953.6 61.4 L945.8 66.2" stroke-width="2"/>
 </g>
 <g fill="none" stroke="#f2f2f2" stroke-width="1.4"><path d="M914.8 55.7 Q921.8 49.2 929.3 55.7 Q921.8 62.2 914.8 55.7 Z"/><circle cx="921.8" cy="55.7" r="1.5" fill="#f2f2f2" stroke="none"/><circle cx="921.8" cy="55.7" r="2.9" stroke-width="0.7" opacity="0.7"/>
 <path d="M913.3 64.2 L910.9 57 M913.3 64.2 H921.5 M913.3 64.2 L917 69.5" stroke-width="1.3"/><path d="M911.2 62.5 Q913.5 67.5 917.8 66.2" stroke-width="0.9"/></g>
 <g fill="#f2f2f2"><path d="M910.4 54.6 L912.8 58.3 L909.6 58.9 Z"/><path d="M923.8 64.2 L920.2 62.4 L920.2 66 Z"/><path d="M918.6 71.6 L915.2 69.8 L918 67.6 Z"/></g>
</svg>

<!-- right slider -->
<div class="abs" style="left:970px;top:152px;width:20px;height:430px;background:#fff;border:1px solid #c9c9d0;border-radius:3px;box-sizing:border-box"></div>
<div class="abs" style="left:974.5px;top:156px;width:5px;height:397px;background:#e9e9ee;border-radius:3px"></div>
<svg class="abs" style="left:966px;top:550px" width="14" height="14"><path d="M4.5 3 V5 L6.2 6.8 L4.5 8.6 V11" fill="none" stroke="#c9c9d0" stroke-width="1"/><rect x="5" y="4.5" width="1" height="4.6" fill="#fff"/></svg>
<div class="abs" style="left:966px;top:564.3px;width:20px;height:14.6px;background:#313036;border-radius:2.5px"></div>
<svg class="abs" style="left:966px;top:564px" width="14" height="16"><path d="M3.9 4.4 H12.6 M3.9 7.6 H12.6 M3.9 10.8 H12.6" stroke="#8d8c96" stroke-width="1.9" fill="none"/></svg>

<!-- bottom status bar -->
<div class="abs bar">
 <b style="left:17px;letter-spacing:-0.05px">Volume</b><span style="left:73px;letter-spacing:-0.2px">4.35 mL</span>
 <b style="left:161.5px;letter-spacing:-0.45px">Layers</b><span style="left:211.5px;letter-spacing:-0.4px">337</span>
 <b style="left:275px;letter-spacing:-0.08px">Print Time</b>
 <div class="abs btn" style="left:347.9px;top:8.9px;width:50.7px;height:28.2px;overflow:hidden"><div class="abs" style="left:0;top:0;width:21.5px;height:27px;background:#ebebee;border-right:1px solid #dddde0;box-shadow:inset 1px 1px 1px rgba(0,0,0,.08)"></div><span style="left:7.2px;top:4.3px;color:#a3a3b3;letter-spacing:0.3px;font-size:13px">--</span>
 <svg class="abs" style="left:-1px;top:-0.4px" width="50.7" height="28.2" viewBox="478.9 702.4 50.7 28.2"><path d="M517.2 710.1 A7.1 7.1 0 1 0 522.8 717.4" fill="none" stroke="#33323a" stroke-width="1.5"/><path d="M515.2 707.4 L519.6 709.5 L515.8 712.2 Z" fill="#33323a"/><circle cx="520.9" cy="711.7" r="0.8" fill="#33323a"/><circle cx="522.6" cy="714.6" r="0.8" fill="#33323a"/></svg></div>
 <b style="left:440px;letter-spacing:-0.17px">Print Settings</b>
 <div class="abs btn" style="left:532px;top:8.8px;width:169px;height:28.2px;font-size:13.5px;line-height:26.2px;color:#45444c;text-align:center;letter-spacing:-0.21px;white-space:nowrap">Form 2, Grey 02, 0.05 mm</div>
</div>
</body></html>
